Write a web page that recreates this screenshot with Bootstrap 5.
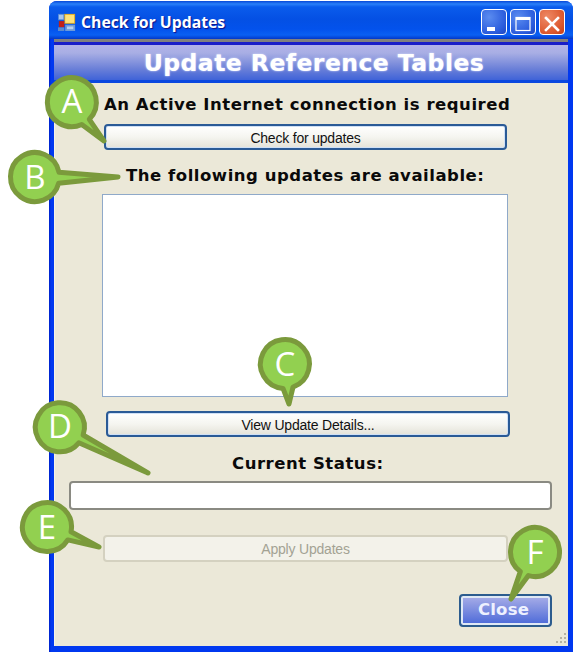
<!DOCTYPE html>
<html lang="en">
<head>
<meta charset="utf-8">
<title>Check for Updates</title>
<link href="https://cdn.jsdelivr.net/npm/bootstrap@5.3.0/dist/css/bootstrap.min.css" rel="stylesheet">
<style>
html,body{margin:0;background:#fff;overflow:hidden}
.stage{position:relative;width:574px;height:653px}
.xpwin{position:absolute;left:49px;top:1px;width:524px;height:651px;border-radius:8px 8px 0 0;padding:0 5px 6px;background:linear-gradient(90deg,#0020c8 0,#0038f0 2px,#0038f0 100%)}
.xptitle{height:38px;margin:0 -5px;padding:4px 8px 0 9px;border-radius:8px 8px 0 0;background:linear-gradient(180deg,#0648d8 0,#2a80f8 3px,#0a5cec 6px,#0450e4 18px,#0352ec 28px,#0a60f2 34px,#0338c8 38px)}
.xptitle-text{font:700 16px/1 "Open Sans",sans-serif;color:#fff;text-shadow:1px 1px 1px #0f1089;margin-left:5px;transform:scaleX(.985);transform-origin:left center;white-space:nowrap}
.wbtn{width:26px;height:26px;border:1px solid #fff;border-radius:4px;display:block;margin-left:3px}
.wblue{background:radial-gradient(circle at 30% 30%,#5b8cf0,#2a5bdc 70%,#1c45c0)}
.wred{background:radial-gradient(circle at 30% 30%,#ee8a66,#dd5a30 65%,#c43c14)}
.band{background:linear-gradient(180deg,#808080 0 3px,#1a1ec8 3px 6px,#b3b3e8 6px,#a8aee4 14px,#6a7fd8 30px,#3f63d8 41px,#0a48e0 41px,#0a48e0 44px);height:44px;padding:5px 0 0 6px;font:700 23.5px/38px "DejaVu Sans",sans-serif;letter-spacing:.45px;color:#fff;text-shadow:0 0 2px #dfe6ff}
.panel{height:563px;background:#ebe8d8;border-left:1px solid #f4f2e8;display:flex;flex-direction:column;align-items:flex-start;position:relative}
.lbl{font:700 16.5px/20px "DejaVu Sans",sans-serif;color:#0a0a0a;white-space:nowrap;letter-spacing:.53px;margin:0}
.lbl-a{margin:12px 0 0 49px}
.lbl-b{margin:16px 0 0 71px}
.lbl-s{margin:17px 0 0 177px}
.xbtn.btn{font:400 14px/1 "Liberation Sans",sans-serif;color:#111;height:26px;padding:1px 0 0;border:2px solid #2a5a96;border-radius:4px;background:linear-gradient(180deg,#fff 0,#f5f5f0 50%,#e4e2d8 100%);box-shadow:inset 0 0 0 1px #cfe0f6;letter-spacing:-.2px}
.act-check{width:403px;margin:9px 0 0 49px}
.act-view{width:404px;margin:14px 0 0 51px}
.listpane{width:406px;height:203px;margin:8px 0 0 47px;background:#fff;border:1px solid #8fa9c9}
.statusin.form-control{width:483px;height:29px;margin:7px 0 0 14px;border:2px solid #8a8a82;border-radius:4px;background:#fff;padding:0}
.xbtn.act-apply,.xbtn.act-apply:disabled{width:405px;height:27px;margin:25px 0 0 48px;border:2px solid #d4d1c0;background:#f3f2ea;box-shadow:none;color:#a3a294;opacity:1;border-radius:4px}
.closebtn.btn{width:93px;height:33px;margin:32px 0 0 404px;padding:0 4px 0 0;border:2px solid #2c5c8e;border-radius:4px;box-shadow:inset 0 0 0 2px #dfe8f5;background:linear-gradient(180deg,#a9aee8 0,#7f8fe0 45%,#4a68d8 100%);color:#eef1ff;font:700 16.5px/1 "DejaVu Sans",sans-serif;letter-spacing:.2px}
.grip{position:absolute;right:0;bottom:0}
.overlay{position:absolute;left:0;top:0}
.ctag{fill:#92d050;stroke:#7b9a3c;stroke-width:5;stroke-linejoin:round}
.cletter{font:400 33px "Open Sans",sans-serif;fill:#fff;text-anchor:middle}
</style>
</head>
<body>
<div class="stage">
  <div class="xpwin">
    <div class="xptitle d-flex align-items-center">
      <svg width="18" height="18" viewBox="0 0 20 20" class="flex-shrink-0">
        <rect x="0" y="1" width="7" height="7" fill="#4f86d8"/><rect x="1" y="2" width="5" height="5" fill="#a8c6ee"/>
        <rect x="7" y="1" width="12" height="11" fill="#e0a81c"/><rect x="8" y="2" width="10" height="9" fill="#ffe27a"/>
        <rect x="1" y="9" width="6" height="7" fill="#c02018"/>
        <rect x="0" y="16" width="7" height="4" fill="#5a8ad0"/><rect x="8" y="13" width="11" height="7" fill="#6c9ad8"/><rect x="10" y="15" width="7" height="3" fill="#b8d0f0"/>
      </svg>
      <span class="xptitle-text">Check for Updates</span>
      <span class="ms-auto d-flex">
        <span class="wbtn wblue"><svg width="24" height="24" viewBox="0 0 24 24"><rect x="5" y="15" width="8" height="4" fill="#fff"/></svg></span>
        <span class="wbtn wblue"><svg width="24" height="24" viewBox="0 0 24 24"><rect x="5" y="5.5" width="14" height="13" fill="none" stroke="#fff" stroke-width="1.2"/><rect x="5" y="5" width="14" height="3" fill="#fff"/></svg></span>
        <span class="wbtn wred"><svg width="24" height="24" viewBox="0 0 24 24"><path d="M6 6L18 18M18 6L6 18" stroke="#fff" stroke-width="2.6" stroke-linecap="square"/></svg></span>
      </span>
    </div>
    <div class="band text-center">Update Reference Tables</div>
    <div class="panel">
      <p class="lbl lbl-a">An Active Internet connection is required</p>
      <button type="button" class="btn xbtn act-check">Check for updates</button>
      <p class="lbl lbl-b">The following updates are available:</p>
      <div class="listpane"></div>
      <button type="button" class="btn xbtn act-view">View Update Details...</button>
      <p class="lbl lbl-s">Current Status:</p>
      <input type="text" class="form-control statusin" aria-label="Current Status">
      <button type="button" class="btn xbtn act-apply" disabled>Apply Updates</button>
      <button type="button" class="btn closebtn">Close</button>
      <svg class="grip" width="14" height="14" viewBox="0 0 14 14" fill="#b5b2a2">
        <rect x="10" y="1" width="2" height="2"/><rect x="6" y="5" width="2" height="2"/><rect x="10" y="5" width="2" height="2"/><rect x="2" y="9" width="2" height="2"/><rect x="6" y="9" width="2" height="2"/><rect x="10" y="9" width="2" height="2"/>
      </svg>
    </div>
  </div>
  <svg class="overlay" width="574" height="653" viewBox="0 0 574 653">
    <path class="ctag" d="M81.8 124.5A24.5 24.5 0 1 1 89.3 119.3L104 141Z"/><text class="cletter" x="72" y="113">A</text>
    <path class="ctag" d="M58.7 183.2A24.5 24.5 0 1 1 59 172.2L118 177Z"/><text class="cletter" x="35" y="189">B</text>
    <path class="ctag" d="M283 388.4A24.5 24.5 0 1 1 293 387.1L289 404Z"/><text class="cletter" x="285" y="376">C</text>
    <path class="ctag" d="M78.8 442.8A24.5 24.5 0 1 1 83.1 435L148 473Z"/><text class="cletter" x="60" y="438">D</text>
    <path class="ctag" d="M67.8 539.9A24.5 24.5 0 1 1 71 531.8L99 547Z"/><text class="cletter" x="47" y="539">E</text>
    <path class="ctag" d="M520.3 571.6A24.5 24.5 0 1 1 528.4 575.6L511 599Z"/><text class="cletter" x="535" y="564">F</text>
  </svg>
</div>
<script src="https://cdn.jsdelivr.net/npm/bootstrap@5.3.0/dist/js/bootstrap.bundle.min.js"></script>
</body>
</html>
